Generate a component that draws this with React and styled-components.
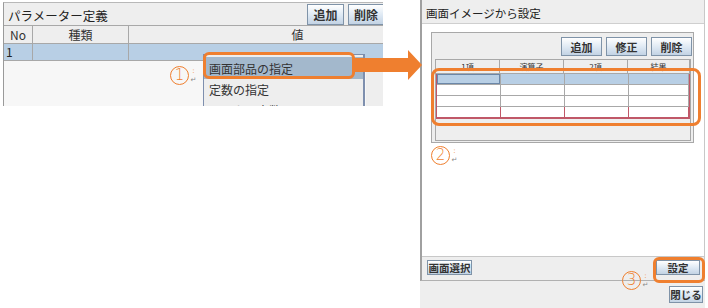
import React from 'react';
import styled, { createGlobalStyle } from 'styled-components';

const orange = '#ef7f2f';

const GlobalStyle = createGlobalStyle`
  html, body { margin: 0; padding: 0; background: #ffffff; }
  body { font-family: "Noto Sans CJK JP", "DejaVu Sans", sans-serif; color: #222; }
`;

const Root = styled.div`
  position: relative;
  width: 708px;
  height: 308px;
  overflow: hidden;
  display: flex;
  align-items: flex-start;
`;

/* ---------- shared swing-ish bits ---------- */

const Button = styled.div`
  box-sizing: border-box;
  height: ${p => p.h || 19}px;
  width: ${p => p.w}px;
  border: 1px solid #7f93a8;
  background: linear-gradient(#ffffff, #dde8f3 55%, #c3d3e4);
  font-size: ${p => p.fs || 11}px;
  font-weight: bold;
  color: #333;
  display: flex;
  align-items: center;
  justify-content: center;
  flex-shrink: 0;
`;

/* ---------- left panel ---------- */

const LeftArea = styled.div`
  width: 383px;
  height: 106px;
  padding: 2px 0 0 3px;
  box-sizing: border-box;
  flex-shrink: 0;
  overflow: hidden;
`;

const LeftPanel = styled.div`
  position: relative;
  height: 104px;
  width: 380px;
  overflow: hidden;
  border-left: 1px solid #9a9a9a;
  border-top: 1px solid #b8b8b8;
  background: #eeeeee;
  display: flex;
  flex-direction: column;
`;

const TitleBar = styled.div`
  height: 22px;
  display: flex;
  align-items: center;
  gap: 4px;
  padding-left: 4px;
`;

const Title = styled.div`
  flex: 1;
  font-size: 12.5px;
  color: #222;
  padding-top: 2px;
`;

const Grid = styled.div`
  display: grid;
  grid-template-columns: ${p => p.cols};
`;

const HeadCell = styled.div`
  box-sizing: border-box;
  height: ${p => p.h}px;
  border-right: 1px solid #a8a8a8;
  border-top: 1px solid ${p => (p.top ? '#a8a8a8' : 'transparent')};
  border-bottom: 1px solid #a8a8a8;
  background: #eeeeee;
  font-size: ${p => p.fs}px;
  color: #333;
  display: flex;
  align-items: center;
  justify-content: center;
  overflow: hidden;
  white-space: nowrap;
`;

const RowCell = styled.div`
  box-sizing: border-box;
  height: ${p => p.h}px;
  background: ${p => (p.sel ? '#b8cfe5' : '#ffffff')};
  border-right: 1px solid ${p => p.line || '#a8a8a8'};
  border-bottom: 1px solid ${p => p.line || '#a8a8a8'};
  box-shadow: ${p => (p.focus ? 'inset 0 0 0 1px #6b87a8' : 'none')};
  font-size: 12px;
  color: #222;
  padding-left: 2px;
  line-height: ${p => p.h - 2}px;
`;

const LeftBody = styled.div`
  flex: 1;
  display: flex;
`;

const WhiteArea = styled.div`
  width: 362px;
  background: #f7f7f7;
`;

const Menu = styled.div`
  position: absolute;
  left: 199px;
  top: 51px;
  width: 162px;
  height: 70px;
  box-sizing: border-box;
  border: 1px solid #7e8fae;
  border-right-width: 2px;
  background: #eeeeee;
  padding-top: 2px;
`;

const MenuItem = styled.div`
  height: ${p => p.h || 21}px;
  background: ${p => (p.active ? '#a3b8cc' : 'transparent')};
  font-size: 12px;
  color: #333;
  display: flex;
  align-items: center;
  padding-left: 5px;
`;

/* ---------- right dialog ---------- */

const RightArea = styled.div`
  margin-left: 37px;
  width: 288px;
  height: 308px;
  display: flex;
  flex-direction: column;
`;

const Dialog = styled.div`
  height: 281px;
  width: 285px;
  box-sizing: border-box;
  border-left: 2px solid #a0a0a0;
  border-right: 1px solid #c8c8c8;
  border-bottom: 1px solid #b0b0b0;
  display: flex;
  flex-direction: column;
`;

const DialogTitle = styled.div`
  height: 24px;
  box-sizing: border-box;
  background: #eeeeee;
  border-bottom: 1px solid #cfcfcf;
  font-size: 11.5px;
  color: #222;
  display: flex;
  align-items: center;
  padding: 2px 0 0 4px;
`;

const DialogBody = styled.div`
  flex: 1;
  background: #ffffff;
  padding: 8px 10px 0 9px;
`;

const InnerPanel = styled.div`
  height: 111px;
  box-sizing: border-box;
  border: 1px solid #a8a8a8;
  background: #eeeeee;
  padding: 4px 1px 0 3px;
  display: flex;
  flex-direction: column;
  gap: 3px;
`;

const ButtonRow = styled.div`
  display: flex;
  justify-content: flex-end;
  gap: 4px;
`;

const TableBox = styled.div`
  height: 81px;
  border: 1px solid #a8a8a8;
  border-top: none;
  background: #eeeeee;
  margin-right: 1px;
`;

const RowsBox = styled.div`
  border: 1px solid #c05868;
  border-top-width: 0;
`;

const FooterBar = styled.div`
  height: 24px;
  box-sizing: border-box;
  background: #eeeeee;
  border-top: 1px solid #c8c8c8;
  display: flex;
  align-items: center;
  justify-content: space-between;
  padding: 0 4px 2px 5px;
`;

const BottomBar = styled.div`
  width: 285px;
  height: 27px;
  background: #eeeeee;
  display: flex;
  justify-content: flex-end;
  align-items: flex-start;
  padding: 5px 2px 0 0;
  box-sizing: border-box;
`;

/* ---------- annotations (overlay) ---------- */

const Mark = styled.div`
  position: absolute;
  left: ${p => p.x}px;
  top: ${p => p.y}px;
  width: ${p => p.w}px;
  height: ${p => p.h}px;
  box-sizing: border-box;
  border: 3px solid ${orange};
  border-radius: ${p => p.r || 6}px;
`;

const Step = styled.div`
  position: absolute;
  left: ${p => p.x}px;
  top: ${p => p.y}px;
  display: flex;
  align-items: center;
  gap: 1px;
`;

const Circled = styled.span`
  box-sizing: border-box;
  width: 19px;
  height: 19px;
  border: 1px solid ${orange};
  border-radius: 50%;
  color: ${orange};
  font-family: "DejaVu Sans", sans-serif;
  font-size: 15px;
  font-weight: 300;
  display: flex;
  align-items: center;
  justify-content: center;
  line-height: 1;
`;

const Dots = styled.span`
  display: flex;
  flex-direction: column;
  align-items: center;
  width: 7px;
  font-family: "DejaVu Sans", sans-serif;
  font-size: 7px;
  line-height: 9px;
  color: #888;

  b { color: ${orange}; font-weight: normal; }
`;

const Arrow = styled.svg`
  position: absolute;
  left: 352px;
  top: 49px;
`;

const StepMark = ({ x, y, n }) => (
  <Step x={x} y={y}>
    <Circled>{n}</Circled>
    <Dots>
      <b>:</b>
      <span>↵</span>
    </Dots>
  </Step>
);

const rightCols = '64px 64px 64px 1fr';

const App = () => {
  return (
    <Root>
      <GlobalStyle />

      <LeftArea>
        <LeftPanel>
          <TitleBar>
            <Title>パラメーター定義</Title>
            <Button w={37} h={21} fs={12}>追加</Button>
            <Button w={36} h={21} fs={12}>削除</Button>
          </TitleBar>
          <Grid cols="29px 96px 338px">
            <HeadCell h={19} fs={12} top>No</HeadCell>
            <HeadCell h={19} fs={12} top>種類</HeadCell>
            <HeadCell h={19} fs={12} top>値</HeadCell>
            <RowCell h={17} sel>1</RowCell>
            <RowCell h={17} sel />
            <RowCell h={17} sel />
          </Grid>
          <LeftBody>
            <WhiteArea />
          </LeftBody>
          <Menu>
            <MenuItem active h={22}>画面部品の指定</MenuItem>
            <MenuItem>定数の指定</MenuItem>
            <MenuItem>ローカル変数</MenuItem>
          </Menu>
        </LeftPanel>
      </LeftArea>

      <RightArea>
        <Dialog>
          <DialogTitle>画面イメージから設定</DialogTitle>
          <DialogBody>
            <InnerPanel>
              <ButtonRow>
                <Button w={41} h={19}>追加</Button>
                <Button w={41} h={19}>修正</Button>
                <Button w={41} h={19}>削除</Button>
              </ButtonRow>
              <TableBox>
                <Grid cols={rightCols}>
                  <HeadCell h={15} fs={8} top>1項</HeadCell>
                  <HeadCell h={15} fs={8} top>演算子</HeadCell>
                  <HeadCell h={15} fs={8} top>2項</HeadCell>
                  <HeadCell h={15} fs={8} top>結果</HeadCell>
                </Grid>
                <RowsBox>
                  <Grid cols={rightCols}>
                    {[0, 1, 2, 3].map(r =>
                      [0, 1, 2, 3].map(c => (
                        <RowCell
                          key={`${r}-${c}`}
                          h={11}
                          sel={r === 0}
                          focus={r === 0 && c === 0}
                          line={r === 3 ? '#c05868' : '#a8a8a8'}
                        />
                      ))
                    )}
                  </Grid>
                </RowsBox>
              </TableBox>
            </InnerPanel>
          </DialogBody>
          <FooterBar>
            <Button w={45} h={15} fs={10.5}>画面選択</Button>
            <Button w={44} h={15} fs={10.5}>設定</Button>
          </FooterBar>
        </Dialog>
        <BottomBar>
          <Button w={34} h={17} fs={10.5}>閉じる</Button>
        </BottomBar>
      </RightArea>

      {/* annotations */}
      <Mark x={203} y={52} w={152} h={27} r={6} />
      <StepMark x={170} y={66} n="1" />

      <Arrow width="70" height="32" viewBox="0 0 70 32">
        <polygon points="0,9 56,9 56,1 70,16 56,31 56,23 0,23" fill={orange} />
      </Arrow>

      <Mark x={431} y={68} w={270} h={58} r={8} />
      <StepMark x={431} y={146} n="2" />

      <Mark x={653} y={257} w={52} h={26} r={6} />
      <StepMark x={622} y={271} n="3" />
    </Root>
  );
};

export default App;
